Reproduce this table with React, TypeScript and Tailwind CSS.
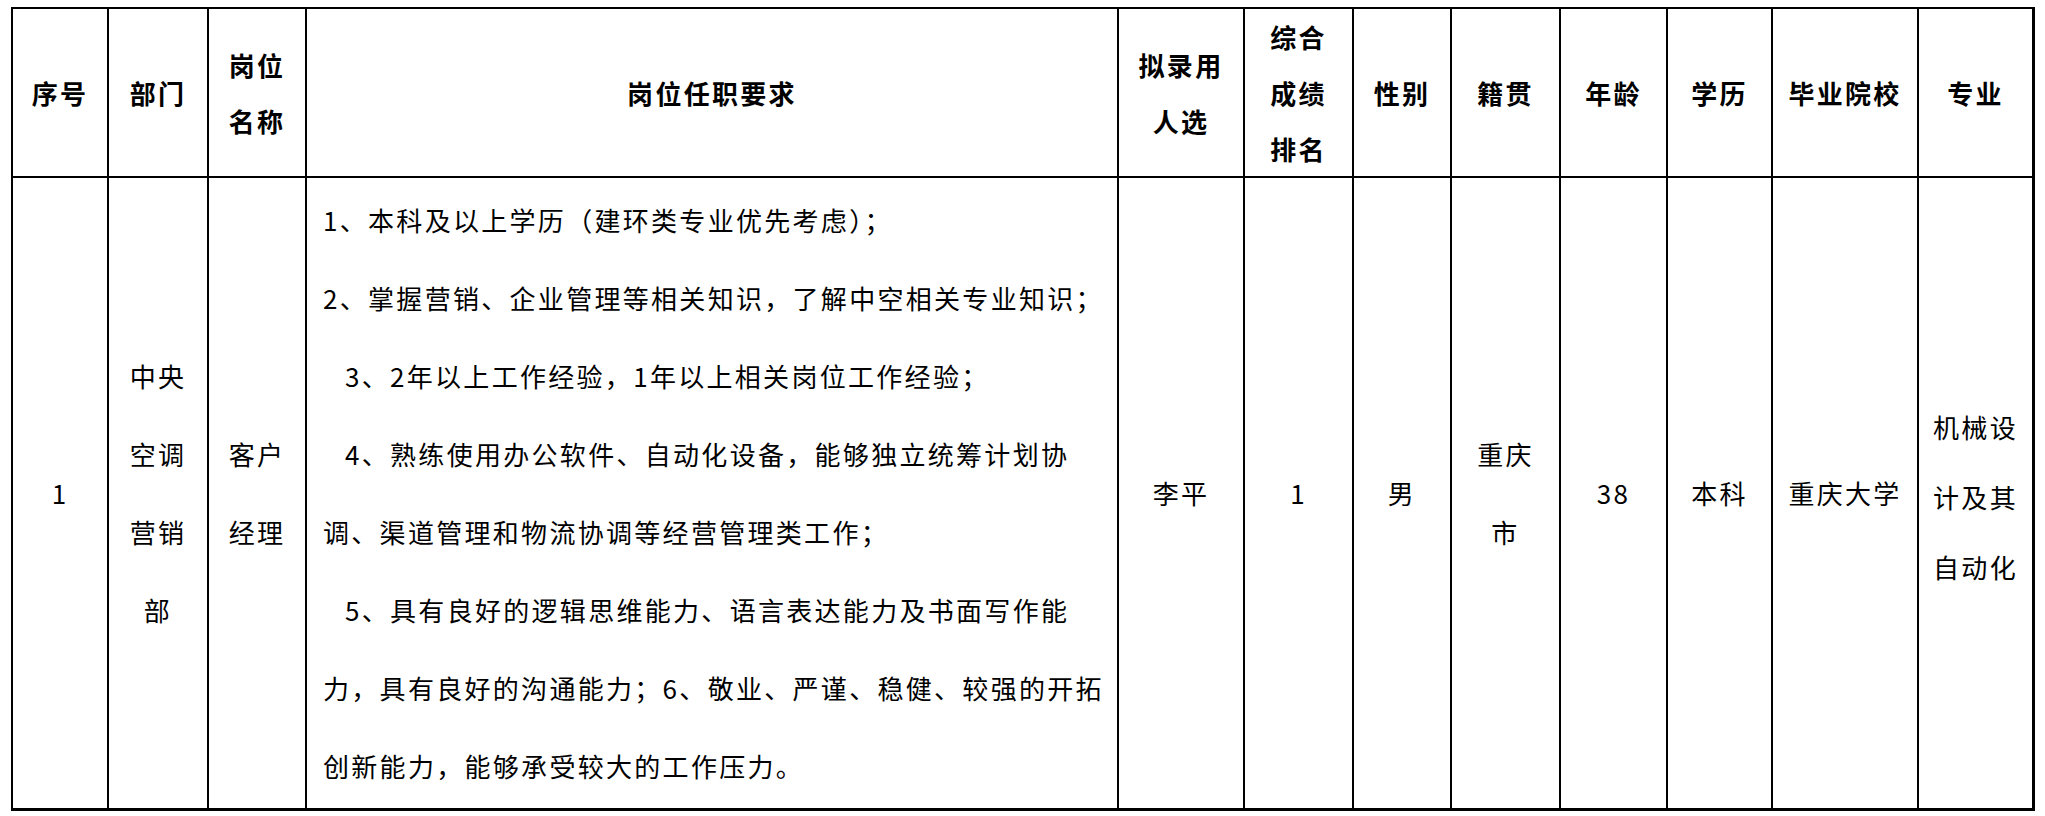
import React from "react";

const font = { fontFamily: '"Noto Sans CJK SC", "Noto Sans", sans-serif' };

const reqLines: { t: string; indent: boolean }[] = [
  { t: "1、本科及以上学历（建环类专业优先考虑）；", indent: false },
  { t: "2、掌握营销、企业管理等相关知识，了解中空相关专业知识；", indent: false },
  { t: "3、2年以上工作经验，1年以上相关岗位工作经验；", indent: true },
  { t: "4、熟练使用办公软件、自动化设备，能够独立统筹计划协", indent: true },
  { t: "调、渠道管理和物流协调等经营管理类工作；", indent: false },
  { t: "5、具有良好的逻辑思维能力、语言表达能力及书面写作能", indent: true },
  { t: "力，具有良好的沟通能力；6、敬业、严谨、稳健、较强的开拓", indent: false },
  { t: "创新能力，能够承受较大的工作压力。", indent: false },
];

function H({ lines }: { lines: string[] }) {
  return (
    <div className="bg-white flex flex-col items-center justify-center text-center font-bold text-[26px] leading-[56px] tracking-[2.3px] text-black">
      {lines.map((l, i) => (
        <div key={i} className="whitespace-nowrap">
          {l}
        </div>
      ))}
    </div>
  );
}

function B({ lines, lh = "leading-[78px]" }: { lines: string[]; lh?: string }) {
  return (
    <div
      className={`bg-white flex flex-col items-center justify-center text-center text-[26px] tracking-[2.3px] text-black ${lh}`}
    >
      {lines.map((l, i) => (
        <div key={i} className="whitespace-nowrap">
          {l}
        </div>
      ))}
    </div>
  );
}

export default function App() {
  return (
    <div className="w-[2045px] h-[816px] bg-white overflow-hidden" style={font}>
      <div className="ml-[11px] mt-[7px] inline-grid bg-black gap-[2px] pt-[2px] pl-[2px] pr-[3px] pb-[3px] grid-cols-[94px_98px_96px_810px_124px_107px_96px_107px_105px_103px_144px_113px] grid-rows-[167px_630px]">
        <H lines={["序号"]} />
        <H lines={["部门"]} />
        <H lines={["岗位", "名称"]} />
        <H lines={["岗位任职要求"]} />
        <H lines={["拟录用", "人选"]} />
        <H lines={["综合", "成绩", "排名"]} />
        <H lines={["性别"]} />
        <H lines={["籍贯"]} />
        <H lines={["年龄"]} />
        <H lines={["学历"]} />
        <H lines={["毕业院校"]} />
        <H lines={["专业"]} />

        <B lines={["1"]} />
        <B lines={["中央", "空调", "营销", "部"]} />
        <B lines={["客户", "经理"]} />
        <div className="bg-white flex flex-col justify-center pl-[16px] text-[26px] leading-[78px] tracking-[2.3px] text-black">
          {reqLines.map((l, i) => (
            <div key={i} className={`whitespace-nowrap ${l.indent ? "pl-[22px]" : ""}`}>
              {l.t}
            </div>
          ))}
        </div>
        <B lines={["李平"]} />
        <B lines={["1"]} />
        <B lines={["男"]} />
        <B lines={["重庆", "市"]} />
        <B lines={["38"]} />
        <B lines={["本科"]} />
        <B lines={["重庆大学"]} />
        <div className="bg-white flex flex-col items-center justify-center pt-[8px] text-center text-[26px] leading-[70px] tracking-[2.3px] text-black">
          <div className="whitespace-nowrap">机械设</div>
          <div className="whitespace-nowrap">计及其</div>
          <div className="whitespace-nowrap">自动化</div>
        </div>
      </div>
    </div>
  );
}
